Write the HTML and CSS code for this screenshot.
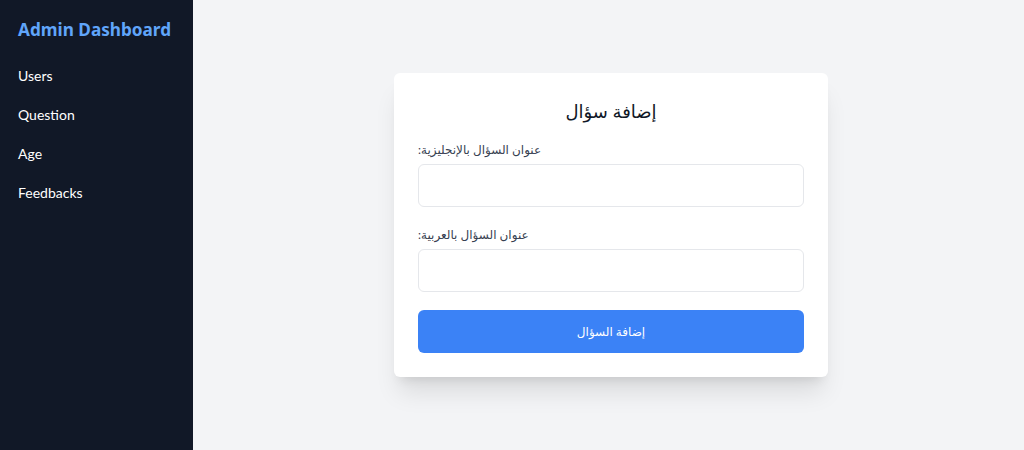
FILE: index.html
```html
<!DOCTYPE html>
<html lang="en">
<head>
<meta charset="utf-8">
<title>Admin Dashboard</title>
<link rel="stylesheet" href="styles.css">
</head>
<body>
<div class="layout">
  <aside class="sidebar">
    <h1 class="brand">Admin Dashboard</h1>
    <nav class="nav">
      <a class="nav-item" href="#">Users</a>
      <a class="nav-item" href="#">Question</a>
      <a class="nav-item" href="#">Age</a>
      <a class="nav-item" href="#">Feedbacks</a>
    </nav>
  </aside>
  <main class="main">
    <form class="card">
      <h2 class="card-title" dir="rtl">إضافة سؤال</h2>
      <div class="field">
        <label class="label"><span dir="rtl">عنوان السؤال بالإنجليزية:</span></label>
        <input class="input" type="text">
      </div>
      <div class="field">
        <label class="label"><span dir="rtl">عنوان السؤال بالعربية:</span></label>
        <input class="input" type="text">
      </div>
      <button class="btn" type="button" dir="rtl">إضافة السؤال</button>
    </form>
  </main>
</div>
</body>
</html>
```
FILE: styles.css
```css
* { box-sizing: border-box; }
html, body { margin: 0; padding: 0; }
body {
  font-family: Lato, "DejaVu Sans", sans-serif;
  background: #f3f4f6;
  color: #111827;
}
.layout {
  display: flex;
  height: 450px;
}
.sidebar {
  width: 193px;
  flex-shrink: 0;
  background: #111827;
  padding: 17px 18px;
}
.brand {
  margin: 0 0 23px;
  font-family: "Noto Sans", "DejaVu Sans", sans-serif;
  font-size: 17.2px;
  line-height: 26px;
  font-weight: 700;
  color: #60a5fa;
  white-space: nowrap;
}
.nav {
  display: flex;
  flex-direction: column;
  gap: 19px;
}
.nav-item {
  color: #ffffff;
  text-decoration: none;
  font-size: 14px;
  line-height: 20px;
}
.main {
  flex: 1;
  display: flex;
  align-items: center;
  justify-content: center;
  padding-left: 5px;
}
.card {
  width: 434px;
  background: #ffffff;
  border-radius: 6px;
  padding: 24px;
  box-shadow: 0 20px 25px -5px rgba(0,0,0,0.1), 0 8px 10px -6px rgba(0,0,0,0.1);
}
.card-title {
  margin: 0 0 15px;
  text-align: center;
  font-size: 18px;
  line-height: 28px;
  font-weight: 500;
  color: #111827;
}
.field {
  margin-bottom: 18px;
}
.label {
  display: block;
  font-size: 12px;
  line-height: 20px;
  color: #374151;
  margin-bottom: 4px;
  text-align: left;
}
.input {
  display: block;
  width: 100%;
  height: 43px;
  border: 1px solid #e5e7eb;
  border-radius: 6px;
  padding: 8px 12px;
  font: inherit;
  background: #fff;
  outline: none;
}
.btn {
  display: block;
  width: 100%;
  height: 43px;
  border: none;
  border-radius: 6px;
  background: #3b82f6;
  color: #ffffff;
  font-family: inherit;
  font-size: 12px;
  font-weight: 500;
  cursor: pointer;
}
```
